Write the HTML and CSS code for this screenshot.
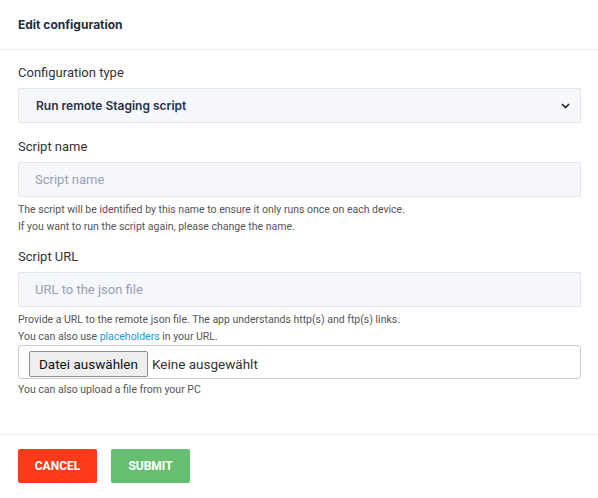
FILE: index.html
```html
<!DOCTYPE html>
<html>
<head>
<meta charset="utf-8">
<link rel="stylesheet" href="styles.css">
</head>
<body>
<div class="dialog">
  <div class="header">Edit configuration</div>
  <div class="body">
    <div class="field">
      <div class="label">Configuration type</div>
      <div class="select">
        <span class="seltext">Run remote Staging script</span>
        <svg class="chev" width="9" height="6" viewBox="0 0 9 6"><path d="M1 1.2 L4.5 4.6 L8 1.2" fill="none" stroke="#2b3046" stroke-width="1.8"/></svg>
      </div>
    </div>
    <div class="field">
      <div class="label">Script name</div>
      <div class="input"><span class="ph">Script name</span></div>
      <div class="help">The script will be identified by this name to ensure it only runs once on each device.<br>If you want to run the script again, please change the name.</div>
    </div>
    <div class="field">
      <div class="label">Script URL</div>
      <div class="input"><span class="ph">URL to the json file</span></div>
      <div class="help">Provide a URL to the remote json file. The app understands http(s) and ftp(s) links.<br>You can also use <a href="#">placeholders</a> in your URL.</div>
      <div class="file"><span class="filebtn">Datei auswählen</span><span class="filetxt">Keine ausgewählt</span></div>
      <div class="help small">You can also upload a file from your PC</div>
    </div>
  </div>
  <div class="footer">
    <button class="btn cancel">CANCEL</button>
    <button class="btn submit">SUBMIT</button>
  </div>
</div>
</body>
</html>
```
FILE: styles.css
```css
html, body { margin: 0; padding: 0; background: #fff; }
body { font-family: Roboto, "Liberation Sans", sans-serif; width: 598px; height: 498px; overflow: hidden; }
.dialog { display: flex; flex-direction: column; }
.header {
  font-family: Inter, "Noto Sans", sans-serif;
  font-weight: 700;
  font-size: 12px;
  line-height: 14px;
  color: #262b3d;
  padding: 18px 18px 0;
  height: 31px;
  border-bottom: 1px solid #ebebf0;
}
.body { padding: 14px 17px 0 18px; display: flex; flex-direction: column; }
.field { display: flex; flex-direction: column; }
.label { font-size: 13px; color: #333; line-height: 17px; margin-bottom: 7px; }
.select {
  box-sizing: border-box;
  height: 35px;
  background: #f6f7fb;
  border: 1px solid #e3e6ef;
  border-radius: 2px;
  display: flex;
  align-items: center;
  padding: 0 10px 0 17px;
  margin-bottom: 15px;
}
.seltext {
  font-family: Inter, "Noto Sans", sans-serif;
  font-weight: 600;
  font-size: 12px;
  color: #2b3046;
}
.chev { margin-left: auto; }
.input {
  box-sizing: border-box;
  height: 35px;
  background: #f6f7fb;
  border: 1px solid #e3e6ef;
  border-radius: 2px;
  display: flex;
  align-items: center;
  padding: 0 16px;
  font-size: 13px;
}
.ph { color: #98a0b4; }
.help { font-size: 10.5px; color: #555; line-height: 17px; margin-top: 4px; }
.help a { color: #1a98d5; text-decoration: none; }
.field:nth-child(2) .help { margin-bottom: 13px; }
.help.small { margin-top: 2px; }
.file {
  box-sizing: border-box;
  height: 34px;
  border: 1px solid #c9ccd6;
  border-radius: 3px;
  display: flex;
  align-items: flex-start;
  padding: 5px 0 0 10px;
  font-size: 13.5px;
  color: #222;
}
.filebtn {
  box-sizing: border-box;
  width: 119px;
  height: 26px;
  display: flex;
  align-items: center;
  justify-content: center;
  border: 1px solid #8f8f8f;
  border-radius: 2px;
  background: #efefef;
  margin-right: 4px;
  color: #111;
}
.filetxt { line-height: 26px; color: #333; }
.footer {
  margin-top: 36px;
  border-top: 1px solid #ebebf0;
  padding: 14px 18px;
  display: flex;
  gap: 14px;
}
.btn {
  width: 79px;
  height: 34px;
  border: none;
  border-radius: 2px;
  color: #fff;
  font-family: Roboto, "Liberation Sans", sans-serif;
  font-weight: 700;
  font-size: 12px;
  padding: 0;
}
.cancel { background: #fd3b19; }
.submit { background: #66bf71; }
```
